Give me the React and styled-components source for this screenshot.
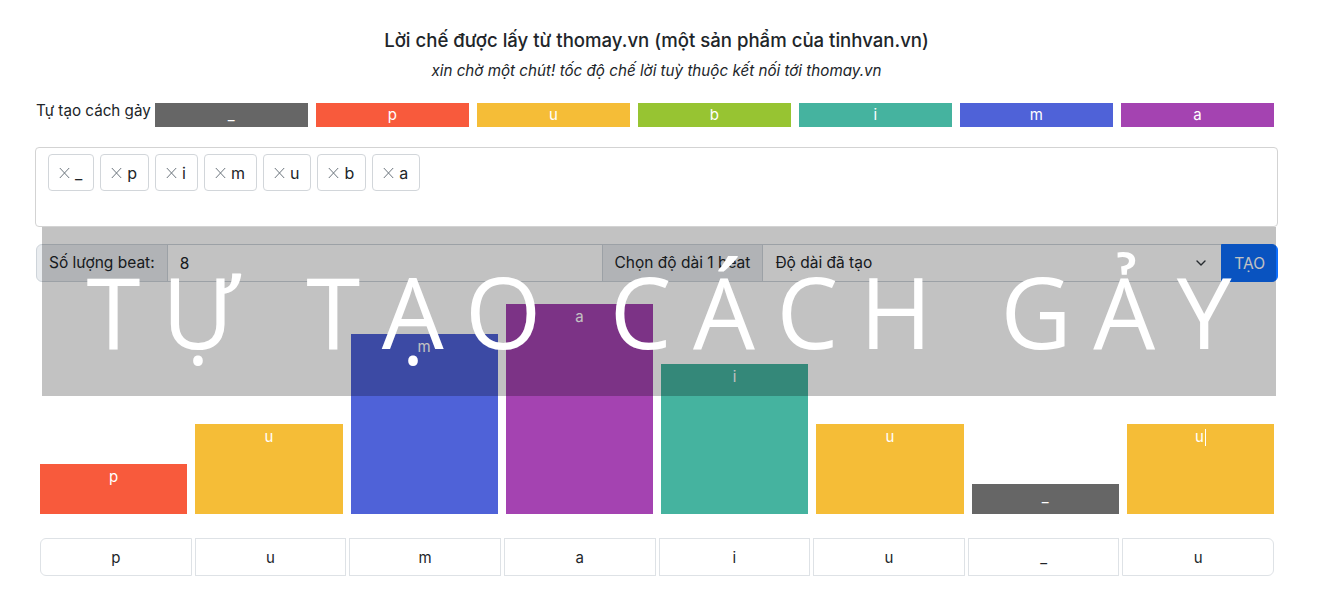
import React from 'react';
import styled, { createGlobalStyle } from 'styled-components';

const COLORS = {
  _: '#666666',
  p: '#f85a3c',
  u: '#f5bd37',
  b: '#97c432',
  i: '#45b39f',
  m: '#4f62d8',
  a: '#a443b1',
};
const HEIGHTS = { _: 30, p: 50, u: 90, b: 120, i: 150, m: 180, a: 210 };
const PALETTE = ['_', 'p', 'u', 'b', 'i', 'm', 'a'];
const CHIPS = ['_', 'p', 'i', 'm', 'u', 'b', 'a'];
const BEATS = ['p', 'u', 'm', 'a', 'i', 'u', '_', 'u'];

const Global = createGlobalStyle`
  html, body { margin: 0; padding: 0; background: #fff; }
  body {
    font-family: Inter, "Noto Sans", "Liberation Sans", sans-serif;
    color: #212529;
    -webkit-font-smoothing: antialiased;
  }
  * { box-sizing: border-box; }
`;

const Page = styled.div`
  position: relative;
  padding: 28px 45px 30px 35px;
`;

const Title = styled.div`
  text-align: center;
  font-size: 18.6px;
  line-height: 24px;
  font-weight: 500;
`;

const Subtitle = styled.div`
  margin-top: 9px;
  text-align: center;
  font-size: 15.2px;
  line-height: 20px;
  font-style: italic;
`;

const PaletteRow = styled.div`
  margin-top: 20px;
  display: flex;
  align-items: flex-start;
  padding-left: 1px;
`;

const PaletteLabel = styled.div`
  font-size: 15.2px;
  line-height: 20px;
  white-space: nowrap;
`;

const Swatch = styled.div`
  flex: 1 1 0;
  margin: 2px 4px 0;
  height: 24px;
  background: ${(p) => p.$color};
  color: #fff;
  font-size: 15px;
  line-height: 24px;
  text-align: center;
`;

const ChipBox = styled.div`
  margin-top: 20px;
  height: 80px;
  border: 1px solid #d3d3d3;
  border-radius: 4px;
  padding: 6px 12px;
  display: flex;
  align-items: flex-start;
  gap: 6px;
`;

const Chip = styled.div`
  display: flex;
  align-items: center;
  height: 37px;
  padding: 0 11px 0 10px;
  border: 1px solid #d2d6da;
  border-radius: 4px;
  background: #fff;
  font-size: 16px;
  color: #212529;
`;

const ChipX = styled.svg`
  width: 11px;
  height: 12px;
  margin-right: 5px;
  flex: none;
`;

const InputGroup = styled.div`
  margin-top: 17px;
  margin-left: 1px;
  display: flex;
  height: 38px;
  font-size: 15.5px;
`;

const GroupText = styled.div`
  display: flex;
  align-items: center;
  padding: 0 12px;
  background: #e9ecef;
  border: 1px solid #ced4da;
  margin-left: -1px;
  white-space: nowrap;
  line-height: 24px;
  border-radius: ${(p) => (p.$first ? '6px 0 0 6px' : '0')};
  &:first-child { margin-left: 0; }
`;

const TextInput = styled.input`
  flex: 1 1 auto;
  width: 1%;
  min-width: 0;
  margin-left: -1px;
  padding: 0 12px;
  border: 1px solid #ced4da;
  font: inherit;
  color: #212529;
  background: #fff;
  outline: none;
`;

const Select = styled.div`
  flex: 1 1 auto;
  width: 1%;
  min-width: 0;
  margin-left: -1px;
  padding: 0 36px 0 12px;
  border: 1px solid #ced4da;
  background: #fff;
  display: flex;
  align-items: center;
  line-height: 24px;
  white-space: nowrap;
`;

const Chevron = styled.svg`
  margin-left: auto;
  margin-right: -24px;
  width: 16px;
  height: 12px;
  flex: none;
`;

const PrimaryButton = styled.button`
  flex: none;
  padding: 0 12px;
  border: 1px solid #0d6efd;
  background: #0d6efd;
  color: #fff;
  font: inherit;
  border-radius: 0 6px 6px 0;
  margin-left: -1px;
`;

const Chart = styled.div`
  margin-top: 22px;
  height: 210px;
  display: flex;
  align-items: flex-end;
  padding-left: 1px;
`;

const Bar = styled.div`
  flex: 1 1 0;
  margin: 0 4px;
  background: ${(p) => p.$color};
  color: #fff;
  font-size: 15px;
  line-height: 18px;
  padding-top: 4px;
  text-align: center;
`;

const Caret = styled.span`
  display: inline-block;
  width: 1px;
  height: 17px;
  margin-left: 1px;
  vertical-align: -4px;
  background: #fff;
`;

const BeatRow = styled.div`
  margin: 24px 4px 0 5px;
  display: flex;
  gap: 3px;
`;

const BeatButton = styled.button`
  flex: 1 1 0;
  height: 38px;
  border: 1px solid #dee2e6;
  background: #fff;
  color: #212529;
  font-family: inherit;
  font-size: 15px;
  border-radius: 0;
  &:first-child { border-radius: 6px 0 0 6px; }
  &:last-child { border-radius: 0 6px 6px 0; }
`;

const Overlay = styled.div`
  position: absolute;
  left: 42px;
  top: 227px;
  width: 1234px;
  height: 169px;
  background: rgba(0, 0, 0, 0.24);
  display: flex;
  align-items: center;
  justify-content: center;
  pointer-events: none;
`;

const OverlayText = styled.div`
  font-family: "Open Sans", "Noto Sans", sans-serif;
  font-weight: 400;
  font-size: 98px;
  line-height: 100px;
  letter-spacing: 21.5px;
  padding-left: 21.5px;
  margin-top: -2px;
  color: #fff;
  white-space: nowrap;
`;

export default function App() {
  return (
    <>
      <Global />
      <Page>
        <Title>Lời chế được lấy từ thomay.vn (một sản phẩm của tinhvan.vn)</Title>
        <Subtitle>xin chờ một chút! tốc độ chế lời tuỳ thuộc kết nối tới thomay.vn</Subtitle>

        <PaletteRow>
          <PaletteLabel>Tự tạo cách gảy</PaletteLabel>
          {PALETTE.map((k) => (
            <Swatch key={k} $color={COLORS[k]}>{k}</Swatch>
          ))}
        </PaletteRow>

        <ChipBox>
          {CHIPS.map((k) => (
            <Chip key={k}>
              <ChipX viewBox="0 0 11 12">
                <path d="M0.8 1 L10.2 11 M10.2 1 L0.8 11" stroke="#6c757d" strokeWidth="1" fill="none" />
              </ChipX>
              {k}
            </Chip>
          ))}
        </ChipBox>

        <InputGroup>
          <GroupText $first>Số lượng beat:</GroupText>
          <TextInput defaultValue="8" />
          <GroupText>Chọn độ dài 1 beat</GroupText>
          <Select>
            Độ dài đã tạo
            <Chevron viewBox="0 0 16 12">
              <path d="M4 4 L8 8 L12 4" stroke="#343a40" strokeWidth="1.4" fill="none" strokeLinecap="round" strokeLinejoin="round" />
            </Chevron>
          </Select>
          <PrimaryButton>TẠO</PrimaryButton>
        </InputGroup>

        <Chart>
          {BEATS.map((k, i) => (
            <Bar key={i} $color={COLORS[k]} style={{ height: HEIGHTS[k] }}>
              {k}
              {i === BEATS.length - 1 && <Caret />}
            </Bar>
          ))}
        </Chart>

        <BeatRow>
          {BEATS.map((k, i) => (
            <BeatButton key={i}>{k}</BeatButton>
          ))}
        </BeatRow>

        <Overlay>
          <OverlayText>TỰ TẠO CÁCH GẢY</OverlayText>
        </Overlay>
      </Page>
    </>
  );
}
